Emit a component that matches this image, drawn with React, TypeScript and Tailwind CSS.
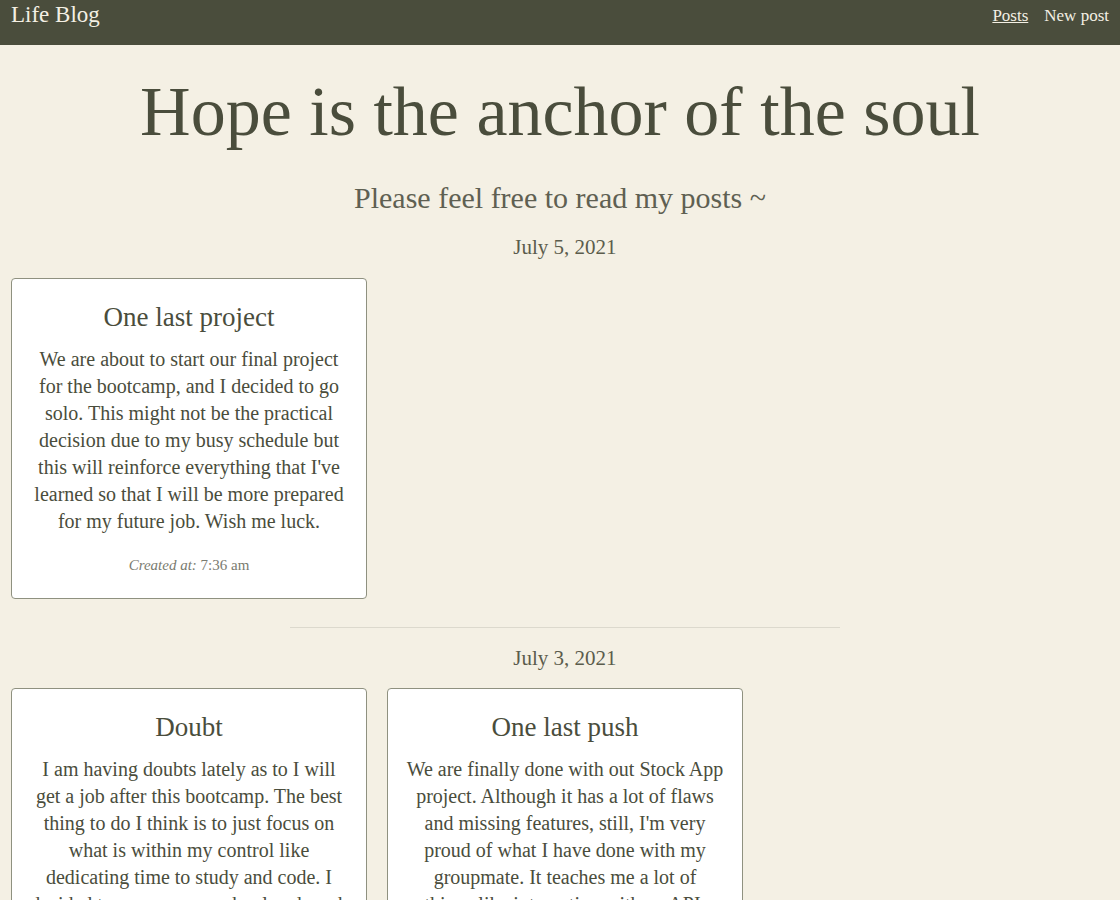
type Post = {
  title: string;
  lines: string[];
  time: string;
};

type Day = {
  date: string;
  posts: Post[];
};

const days: Day[] = [
  {
    date: "July 5, 2021",
    posts: [
      {
        title: "One last project",
        lines: [
          "We are about to start our final project",
          "for the bootcamp, and I decided to go",
          "solo. This might not be the practical",
          "decision due to my busy schedule but",
          "this will reinforce everything that I've",
          "learned so that I will be more prepared",
          "for my future job. Wish me luck.",
        ],
        time: "7:36 am",
      },
    ],
  },
  {
    date: "July 3, 2021",
    posts: [
      {
        title: "Doubt",
        lines: [
          "I am having doubts lately as to I will",
          "get a job after this bootcamp. The best",
          "thing to do I think is to just focus on",
          "what is within my control like",
          "dedicating time to study and code. I",
          "decided to manage my school and work",
          "schedule better.",
        ],
        time: "9:12 pm",
      },
      {
        title: "One last push",
        lines: [
          "We are finally done with out Stock App",
          "project. Although it has a lot of flaws",
          "and missing features, still, I'm very",
          "proud of what I have done with my",
          "groupmate. It teaches me a lot of",
          "things like integrating with an API.",
        ],
        time: "8:05 pm",
      },
    ],
  },
];

function PostCard({ post }: { post: Post }) {
  return (
    <div className="bg-white border border-[#8f9180] rounded-[4px] px-[16px] pt-[21px] pb-[23px] text-center text-[#4a4d3c]">
      <h3 className="text-[27px] leading-[34px] mb-[12px]">{post.title}</h3>
      <p className="text-[20px] leading-[27px]">
        {post.lines.map((l) => (
          <span key={l} className="block whitespace-nowrap">
            {l}
          </span>
        ))}
      </p>
      <p className="mt-[20px] text-[15px] leading-[20px] text-[#7a7b70]">
        <em>Created at:</em> {post.time}
      </p>
    </div>
  );
}

function App() {
  return (
    <div className="min-h-screen bg-[#f4f0e4] font-['Liberation_Serif',serif]">
      <nav className="h-[45px] bg-[#4a4d3c] flex items-center justify-between px-[11px]">
        <a href="#" className="text-[23px] text-[#f4f0e4] -mt-[14px]">
          Life Blog
        </a>
        <div className="flex gap-4 text-[17px] text-[#f4f0e4] -mt-[14px]">
          <a href="#" className="underline">
            Posts
          </a>
          <a href="#">New post</a>
        </div>
      </nav>

      <header className="text-center">
        <h1 className="text-[70px] leading-[80px] pt-[27px] text-[#4a4d3c]">
          Hope is the anchor of the soul
        </h1>
        <h2 className="text-[30px] leading-[40px] mt-[26px] text-[#5f6052]">
          Please feel free to read my posts ~
        </h2>
      </header>

      <main className="pl-[11px] pr-[1px] pb-10">
        {days.map((day, i) => (
          <section key={day.date}>
            {i > 0 && (
              <hr className="mx-auto w-[550px] border-t border-[#dcd9cd] mt-[28px]" />
            )}
            <h4
              className={
                i > 0
                  ? "text-center text-[21px] text-[#5b5c4c] leading-[30px] pt-[15px] pb-[15px]"
                  : "text-center text-[21px] text-[#5b5c4c] leading-[30px] pt-[14px] pb-[16px]"
              }
            >
              {day.date}
            </h4>
            <div className="grid grid-cols-3 gap-5">
              {day.posts.map((p) => (
                <PostCard key={p.title} post={p} />
              ))}
            </div>
          </section>
        ))}
      </main>
    </div>
  );
}

export default App;
